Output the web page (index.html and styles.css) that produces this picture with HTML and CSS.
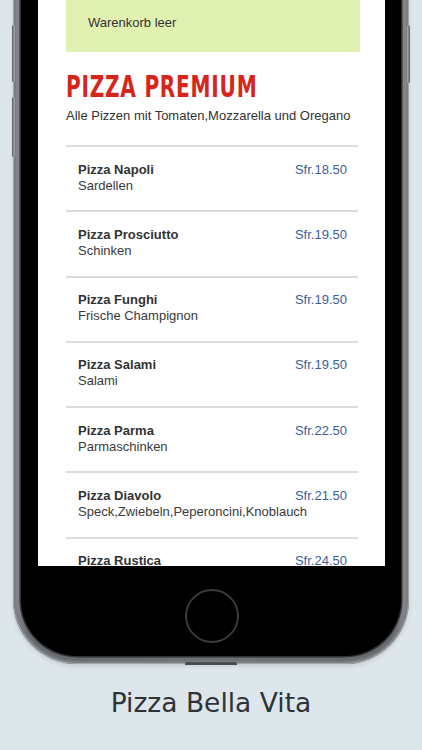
FILE: index.html
```html
<!DOCTYPE html>
<html lang="de">
<head>
  <meta charset="UTF-8" />
  <meta name="viewport" content="width=device-width, initial-scale=1.0"/>
  <title>Pizza Bella Vita</title>
  <link rel="stylesheet" href="styles.css">
</head>
<body>
  <div class="phone">
    <span class="side-btn btn-left-1"></span>
    <span class="side-btn btn-left-2"></span>
    <span class="side-btn btn-right"></span>
    <span class="port"></span>

    <div class="bezel">
      <div class="screen">
        <!-- Warenkorb -->
        <div class="cart">Warenkorb leer</div>

        <h1 class="category">PIZZA PREMIUM</h1>
        <p class="category-info">Alle Pizzen mit Tomaten,Mozzarella und Oregano</p>

        <!-- Menu -->
        <ul class="menu">
          <li class="menu-item">
            <div class="item-name">Pizza Napoli</div>
            <div class="item-price">Sfr.18.50</div>
            <div class="item-desc">Sardellen</div>
          </li>
          <li class="menu-item">
            <div class="item-name">Pizza Prosciutto</div>
            <div class="item-price">Sfr.19.50</div>
            <div class="item-desc">Schinken</div>
          </li>
          <li class="menu-item">
            <div class="item-name">Pizza Funghi</div>
            <div class="item-price">Sfr.19.50</div>
            <div class="item-desc">Frische Champignon</div>
          </li>
          <li class="menu-item">
            <div class="item-name">Pizza Salami</div>
            <div class="item-price">Sfr.19.50</div>
            <div class="item-desc">Salami</div>
          </li>
          <li class="menu-item">
            <div class="item-name">Pizza Parma</div>
            <div class="item-price">Sfr.22.50</div>
            <div class="item-desc">Parmaschinken</div>
          </li>
          <li class="menu-item">
            <div class="item-name">Pizza Diavolo</div>
            <div class="item-price">Sfr.21.50</div>
            <div class="item-desc">Speck,Zwiebeln,Peperoncini,Knoblauch</div>
          </li>
          <li class="menu-item">
            <div class="item-name">Pizza Rustica</div>
            <div class="item-price">Sfr.24.50</div>
            <div class="item-desc">Speck,Zwiebeln</div>
          </li>
        </ul>
      </div>

      <div class="home-area">
        <div class="home-btn"></div>
      </div>
    </div>
  </div>

  <p class="caption">Pizza Bella Vita</p>
</body>
</html>
```

FILE: styles.css
```css
body {
  margin: 0;
  background-color: #dde6eb;
  font-family: 'Liberation Sans', Arial, sans-serif;
  color: #333;
  overflow: hidden;
}

/* ========== Phone frame ========== */
.phone {
  position: relative;
  width: 396px;
  height: 764px;
  margin: -100px auto 0;
  box-sizing: border-box;
  padding: 8px;
  border-radius: 64px;
  background: linear-gradient(90deg, #8b8e92, #66696d 4%, #707377 50%, #66696d 96%, #8b8e92);
  box-shadow: inset 0 0 0 1px #a3a5a8, inset 0 0 0 3px #7a7d81, 0 2px 4px rgba(0,0,0,0.12);
}

.side-btn {
  position: absolute;
  width: 3px;
  border-radius: 2px;
  background: linear-gradient(90deg, #5f6266, #a9abae);
}

.btn-left-1 { left: -1px; top: 125px; height: 57px; }
.btn-left-2 { left: -1px; top: 197px; height: 60px; }
.btn-right  { right: -1px; top: 125px; height: 58px; background: linear-gradient(90deg, #a9abae, #5f6266); }

.port {
  position: absolute;
  bottom: -1px;
  left: 172px;
  width: 52px;
  height: 3px;
  border-radius: 2px 2px 0 0;
  background-color: #4a4c50;
}

.bezel {
  height: 100%;
  border-radius: 56px;
  background-color: #000;
  box-shadow: 0 0 0 1.5px #303134;
  padding: 52px 16px 0 17px;
  box-sizing: border-box;
}

.screen {
  height: 606px;
  overflow: hidden;
  background-color: #fff;
  padding: 0 25px 0 28px;
}

.home-area {
  display: flex;
  justify-content: center;
  padding-top: 23px;
}

.home-btn {
  width: 50px;
  height: 50px;
  border-radius: 50%;
  border: 2px solid #3b3c3f;
}

/* ========== Screen content ========== */
.cart {
  height: 92px;
  box-sizing: border-box;
  display: flex;
  align-items: flex-end;
  padding: 0 22px 21px;
  background-color: #e0f1b2;
  font-size: 13px;
  line-height: 16px;
  color: #333;
}

.category {
  margin: 18px 0 0;
  font-family: 'DejaVu Sans Condensed', 'DejaVu Sans', sans-serif;
  font-stretch: condensed;
  font-weight: bold;
  font-size: 30px;
  line-height: 34px;
  letter-spacing: 1px;
  color: #d6261c;
  transform: scaleX(0.745);
  transform-origin: left center;
  white-space: nowrap;
}

.category-info {
  margin: 4px 0 0;
  font-size: 13px;
  line-height: 16px;
  color: #333;
}

.menu {
  list-style: none;
  margin: 21px 0 0;
  padding: 0;
}

.menu-item {
  display: grid;
  grid-template-columns: 1fr auto;
  border-top: 2px solid #dcdcdc;
  padding: 14.5px 11px 16.8px 12px;
  margin-right: 2px;
  font-size: 13px;
  line-height: 16px;
}

.item-name {
  font-weight: bold;
  color: #333;
}

.item-desc {
  grid-column: 1 / 3;
  white-space: nowrap;
  color: #3a3a3a;
}

.item-price {
  color: #3b5e99;
}

/* ========== Caption ========== */
.caption {
  margin: 23px 0 0;
  text-align: center;
  font-family: 'DejaVu Sans', sans-serif;
  font-size: 26.5px;
  line-height: 32px;
  color: #2e3338;
}
```
